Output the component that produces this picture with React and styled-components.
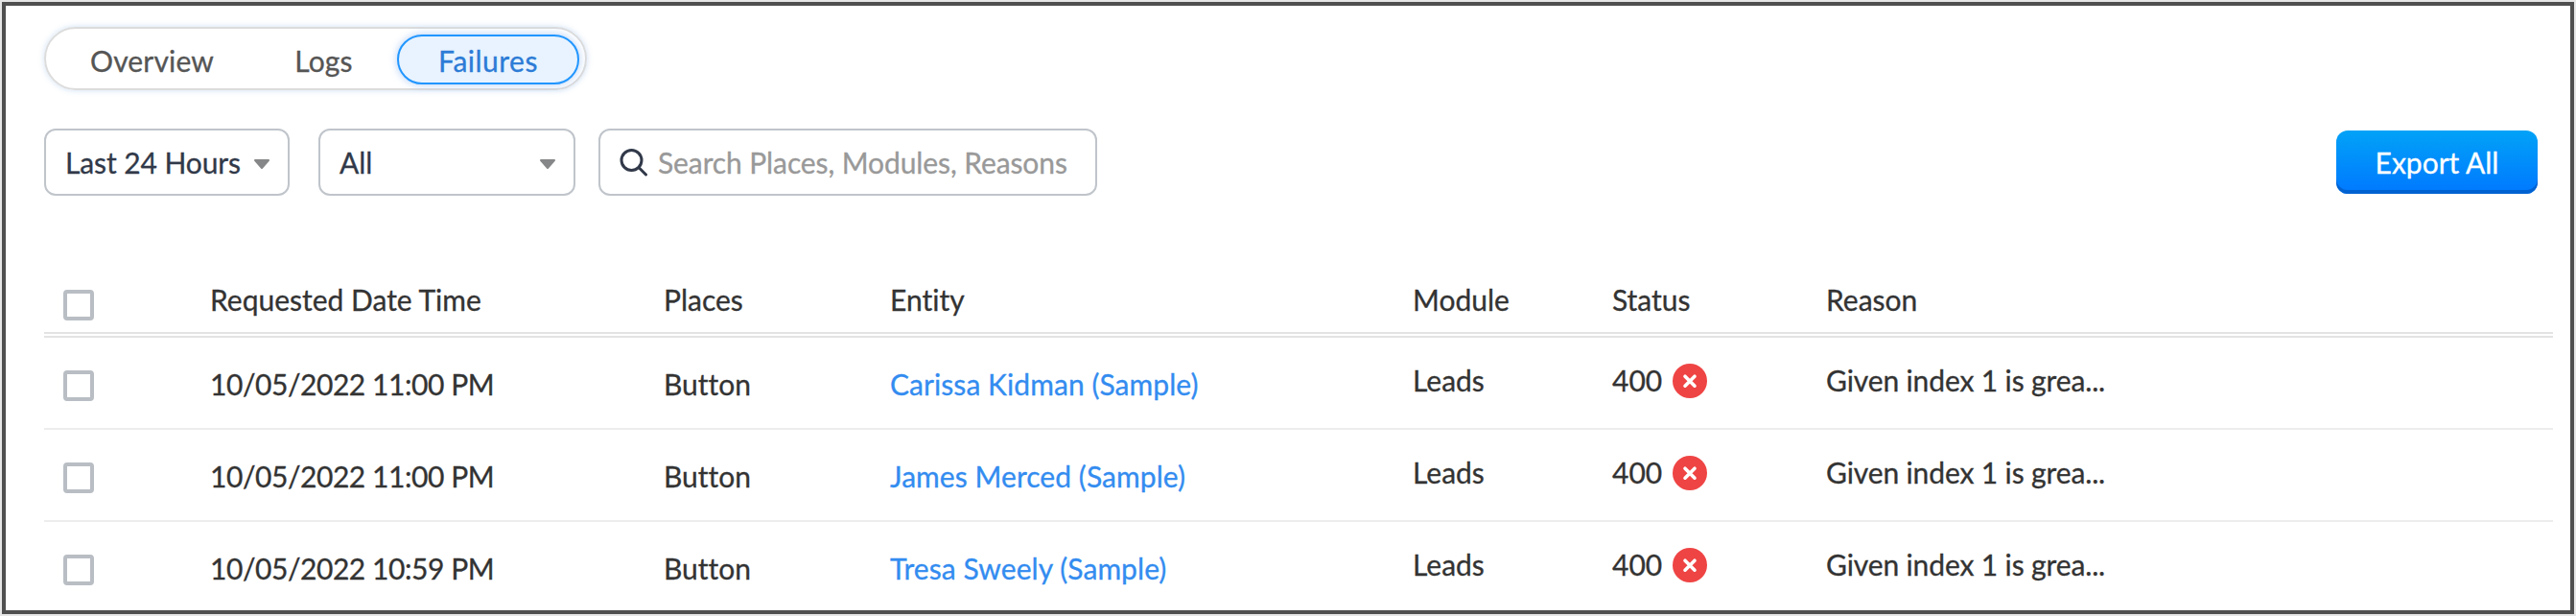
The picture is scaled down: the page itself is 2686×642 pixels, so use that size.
import React from 'react';
import styled, { createGlobalStyle } from 'styled-components';

const GlobalStyle = createGlobalStyle`
  * {
    box-sizing: border-box;
  }

  body {
    margin: 0;
    background: #e6e6e6;
    font-family: Lato, 'Open Sans', sans-serif;
    font-size: 30px;
    font-variant-ligatures: none;
    color: #333;
    -webkit-text-stroke: 0.3px;
  }
`;

const Page = styled.div`
  width: 2686px;
  height: 642px;
  padding: 2px;
`;

const Panel = styled.main`
  height: 638px;
  padding: 22px 18px 0 40px;
  overflow: hidden;
  background: #fff;
  border: 4px solid #4f4f50;
`;

const Tabs = styled.nav`
  display: flex;
  align-items: center;
  width: 566px;
  height: 66px;
  padding: 2px 6px 0 8px;
  border: 2px solid #dcdcdc;
  border-radius: 33px;
  box-shadow: 0 0 6px rgba(60, 130, 210, 0.25);
`;

const Tab = styled.button`
  width: ${(props) => props.$width}px;
  height: 52px;
  padding: 2px 0 0;
  font: inherit;
  line-height: 46px;
  letter-spacing: ${(props) => (props.$active ? 0.5 : 0.15)}px;
  text-align: center;
  color: ${(props) => (props.$active ? '#2c7bd6' : '#555')};
  background: ${(props) => (props.$active ? '#e8f3ff' : 'transparent')};
  border: 2px solid ${(props) => (props.$active ? '#2196ff' : 'transparent')};
  border-radius: 26px;
  box-shadow: ${(props) => (props.$active ? '0 0 8px rgba(60, 130, 230, 0.4)' : 'none')};
`;

const Toolbar = styled.div`
  display: flex;
  align-items: center;
  height: 70px;
  margin-top: 40px;
  padding-right: 16px;
`;

const Field = styled.div`
  display: flex;
  align-items: center;
  justify-content: space-between;
  width: ${(props) => props.$width}px;
  height: 70px;
  margin-right: ${(props) => props.$gap}px;
  padding: 0 18px 0 20px;
  letter-spacing: -0.1px;
  color: #313949;
  border: 2px solid #c0c5cb;
  border-radius: 12px;
`;

const SearchField = styled(Field)`
  justify-content: flex-start;
  gap: 10px;
`;

const SearchInput = styled.input`
  flex: 1;
  min-width: 0;
  padding: 0;
  font: inherit;
  letter-spacing: inherit;
  color: #333;
  background: none;
  border: 0;
  outline: 0;

  &::placeholder {
    color: #999;
    opacity: 1;
  }
`;

const ExportButton = styled.button`
  width: 210px;
  height: 66px;
  margin-left: auto;
  padding: 0;
  font: inherit;
  line-height: 66px;
  color: #fff;
  background: linear-gradient(#02a2f7, #0078ff);
  border: 0;
  border-radius: 12px;
  box-shadow: inset 0 -4px 0 #0062d1;
`;

const Table = styled.div`
  margin-top: 76px;
`;

const Row = styled.div`
  display: grid;
  grid-template-columns: 173px 473px 236px 545px 208px 223px 1fr;
  align-items: center;
  height: 96px;
  border-bottom: 2px solid #ededed;
`;

const HeaderRow = styled(Row)`
  height: 72px;
  border-bottom: 6px double #e3e3e3;
`;

const Cell = styled.div`
  display: flex;
  align-items: center;
  height: 36px;
  line-height: 36px;
  white-space: nowrap;
  margin-top: ${(props) => props.$shift || 0}px;
`;

const TimeCell = styled(Cell)`
  letter-spacing: -0.45px;
`;

const ReasonCell = styled(Cell)`
  letter-spacing: -0.13px;
`;

const Checkbox = styled.span`
  width: 32px;
  height: 32px;
  margin-left: 20px;
  border: 4px solid #b9bec4;
  border-radius: 4px;
`;

const EntityLink = styled.a`
  letter-spacing: 0.06px;
  color: #338cf0;
`;

const Code = styled.span`
  margin: -2px 11px 0 0;
`;

const ArrowIcon = styled.svg`
  margin-top: 3px;
`;

const Arrow = () => (
  <ArrowIcon width="18" height="12" viewBox="0 0 18 12">
    <path d="M2 2h14L9 10z" fill="#868788" stroke="#868788" strokeWidth="2" strokeLinejoin="round" />
  </ArrowIcon>
);

const SearchIcon = () => (
  <svg width="30" height="30" viewBox="0 0 30 30" fill="none" stroke="#313949" strokeWidth="3">
    <circle cx="12.5" cy="13" r="10.5" />
    <path d="M20.5 21l7 7" strokeLinecap="round" />
  </svg>
);

const FailedIcon = () => (
  <svg width="36" height="36" viewBox="0 0 36 36">
    <circle cx="18" cy="18" r="18" fill="#ef4444" />
    <path d="M13 13.2l10 10M23 13.2l-10 10" stroke="#fff" strokeWidth="3.6" strokeLinecap="round" />
  </svg>
);

const failures = [
  { id: 1, time: '10/05/2022 11:00 PM', entity: 'Carissa Kidman (Sample)' },
  { id: 2, time: '10/05/2022 11:00 PM', entity: 'James Merced (Sample)' },
  { id: 3, time: '10/05/2022 10:59 PM', entity: 'Tresa Sweely (Sample)' },
];

const FailureRow = ({ time, entity }) => (
  <Row>
    <Cell $shift={6}>
      <Checkbox />
    </Cell>
    <TimeCell $shift={2}>{time}</TimeCell>
    <Cell $shift={2}>Button</Cell>
    <Cell $shift={2}>
      <EntityLink>{entity}</EntityLink>
    </Cell>
    <Cell $shift={-6}>Leads</Cell>
    <Cell $shift={-4}>
      <Code>400</Code>
      <FailedIcon />
    </Cell>
    <ReasonCell $shift={-6}>Given index 1 is grea...</ReasonCell>
  </Row>
);

const App = () => (
  <Page>
    <GlobalStyle />
    <Panel>
      <Tabs>
        <Tab $width={205}>Overview</Tab>
        <Tab $width={153}>Logs</Tab>
        <Tab $width={190} $active>
          Failures
        </Tab>
      </Tabs>
      <Toolbar>
        <Field $width={256} $gap={30}>
          Last 24 Hours
          <Arrow />
        </Field>
        <Field $width={268} $gap={24}>
          All
          <Arrow />
        </Field>
        <SearchField $width={520} $gap={0}>
          <SearchIcon />
          <SearchInput placeholder="Search Places, Modules, Reasons" />
        </SearchField>
        <ExportButton>Export All</ExportButton>
      </Toolbar>
      <Table>
        <HeaderRow>
          <Cell $shift={10}>
            <Checkbox />
          </Cell>
          <Cell $shift={-2}>Requested Date Time</Cell>
          <Cell $shift={-2}>Places</Cell>
          <Cell $shift={-2}>Entity</Cell>
          <Cell $shift={-2}>Module</Cell>
          <Cell $shift={-2}>Status</Cell>
          <Cell $shift={-2}>Reason</Cell>
        </HeaderRow>
        {failures.map((failure) => (
          <FailureRow key={failure.id} {...failure} />
        ))}
      </Table>
    </Panel>
  </Page>
);

export default App;
